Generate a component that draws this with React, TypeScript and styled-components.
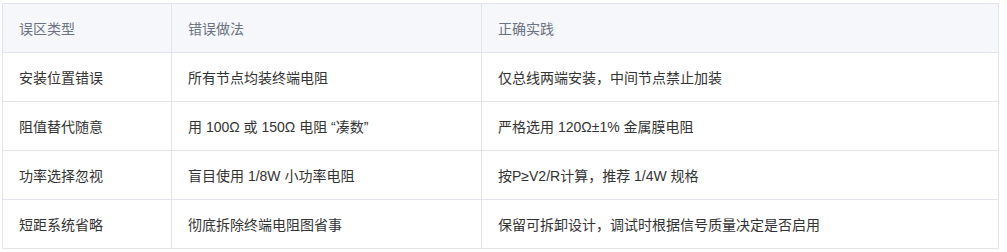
import React from 'react';
import styled, { createGlobalStyle } from 'styled-components';

const GlobalStyle = createGlobalStyle`
  html, body {
    margin: 0;
    padding: 0;
    background: #ffffff;
  }
  body {
    font-family: "Liberation Sans", "Noto Sans CJK SC", sans-serif;
  }
`;

const Wrapper = styled.div`
  padding: 3px 9px 0 2px;
`;

const Table = styled.table`
  width: 996px;
  border-collapse: collapse;
  table-layout: fixed;
  font-size: 14px;
`;

const HeadCell = styled.th<{ $width: number }>`
  width: ${props => props.$width}px;
  height: 49px;
  padding: 0 16px;
  box-sizing: border-box;
  text-align: left;
  font-weight: normal;
  color: #6b7280;
  background: #f5f7fa;
  border: 1px solid #e2e5ee;
`;

const Cell = styled.td`
  height: 49px;
  padding: 0 16px;
  box-sizing: border-box;
  color: #333333;
  background: #ffffff;
  border: 1px solid #e2e5ee;
`;

const columns = [
  { name: '误区类型', width: 169 },
  { name: '错误做法', width: 310 },
  { name: '正确实践', width: 517 },
];

const rows = [
  ['安装位置错误', '所有节点均装终端电阻', '仅总线两端安装，中间节点禁止加装'],
  ['阻值替代随意', '用 100Ω 或 150Ω 电阻 “凑数”', '严格选用 120Ω±1% 金属膜电阻'],
  ['功率选择忽视', '盲目使用 1/8W 小功率电阻', '按P≥V2/R计算，推荐 1/4W 规格'],
  ['短距系统省略', '彻底拆除终端电阻图省事', '保留可拆卸设计，调试时根据信号质量决定是否启用'],
];

const App = () => {
  return (
    <Wrapper>
      <GlobalStyle />
      <Table>
        <thead>
          <tr>
            {columns.map(col => (
              <HeadCell key={col.name} $width={col.width}>
                {col.name}
              </HeadCell>
            ))}
          </tr>
        </thead>
        <tbody>
          {rows.map(row => (
            <tr key={row[0]}>
              {row.map(text => (
                <Cell key={text}>{text}</Cell>
              ))}
            </tr>
          ))}
        </tbody>
      </Table>
    </Wrapper>
  );
};

export default App;
